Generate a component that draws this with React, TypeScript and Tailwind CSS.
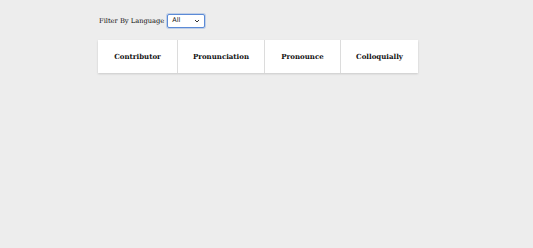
export default function App() {
  const cols = [
    { name: 'Contributor', w: 'w-[79px]' },
    { name: 'Pronunciation', w: 'w-[87px]' },
    { name: 'Pronounce', w: 'w-[76px]' },
    { name: 'Colloquially', w: 'w-[78px]' },
  ];

  return (
    <div className="min-h-[248px] w-full bg-[#ededed] font-['DejaVu_Serif',serif] text-[#111]">
      <div className="pl-[99px] pt-[14px]">
        <div className="flex items-center gap-[3px] text-[6.7px]">
          <span className="pt-[1px]">Filter By Language</span>
          <div className="flex h-[14px] w-[38px] items-center justify-between rounded-[2px] border border-[#5b8ad6] bg-white pl-[4px] pr-[4px] font-['DejaVu_Sans',sans-serif] text-[6.5px] shadow-[0_0_0_1px_rgba(91,138,214,0.3)]">
            <span>All</span>
            <svg width="6" height="4" viewBox="0 0 6 4" fill="none">
              <path d="M1 1l2 2 2-2" stroke="#333" strokeWidth="1" />
            </svg>
          </div>
        </div>
      </div>
      <div className="ml-[98px] mt-[12px] flex w-[320px] bg-white shadow-[0_1px_2px_rgba(0,0,0,0.15)]">
        {cols.map((c, i) => (
          <div
            key={c.name}
            className={`${c.w} flex h-[33px] items-center justify-center pt-[2px] text-[7px] font-bold ${i > 0 ? 'border-l border-[#dcdcdc]' : ''}`}
          >
            {c.name}
          </div>
        ))}
      </div>
    </div>
  );
}
